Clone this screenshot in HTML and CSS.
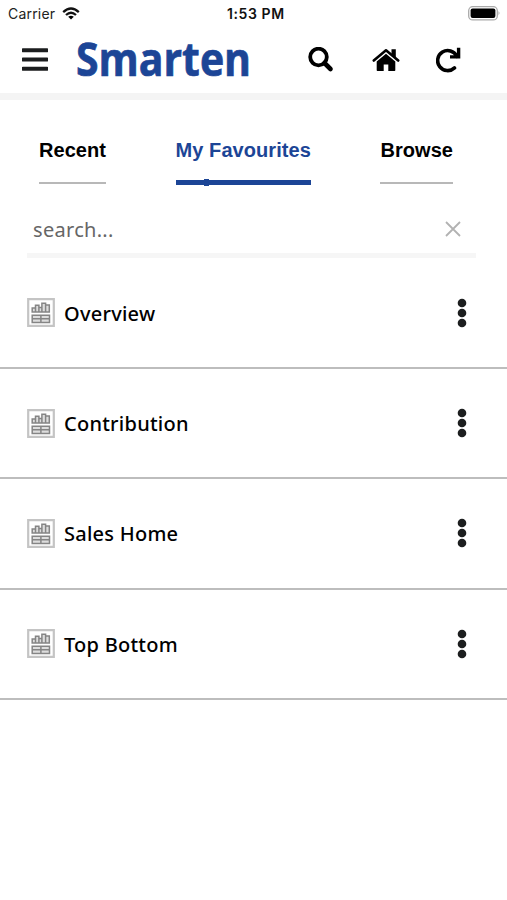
FILE: index.html
```html
<!DOCTYPE html>
<html lang="en">
<head>
<meta charset="utf-8">
<title>Smarten</title>
<link rel="stylesheet" href="styles.css">
</head>
<body>
<svg class="defs" width="0" height="0" aria-hidden="true">
  <symbol id="report" viewBox="0 0 28 29">
    <path d="M1.2 1.2h25.600v26.600H1.200z" fill="#fff" stroke="#c4c4c4" stroke-width="2.200"/>
    <path d="M5.200 14v-4H8.500v4zM8.500 14V7.300h3.400V14zM11.900 14V9.500h3V14zM14.900 14V5.300h3.700V14zM18.600 14V7h3.700v7zM5.200 17.200h17.300v7.200H5.200zM5.200 20.800h17.300M13.900 17.200v7.200" fill="#ddd" stroke="#858585" stroke-width="1.500"/>
  </symbol>
  <symbol id="dots" viewBox="0 0 10 30">
    <circle cx="5" cy="5" r="4.300"/><circle cx="5" cy="15" r="4.300"/><circle cx="5" cy="25" r="4.300"/>
  </symbol>
</svg>
<div class="status">
  <span class="carrier">Carrier</span>
  <svg class="wifi" viewBox="0 0 18 13"><path d="M1.200 5.100Q9-2 16.800 5.100M4 8Q9 3.500 14 8" fill="none" stroke="#111" stroke-width="2.300"/><path d="M9 12.500 6.200 9.800Q9 7.800 11.800 9.800z"/></svg>
  <span class="time">1:53 PM</span>
  <svg class="battery" viewBox="0 0 33 15"><rect x=".7" y=".7" width="28.600" height="13.200" rx="4" fill="#fff" stroke="#aaa" stroke-width="1.300"/><rect x="2.600" y="2.500" width="24.800" height="9.600" rx="2"/><path d="M30.700 5q1.600 2.300 0 4.600z" fill="#777"/></svg>
</div>
<header class="header">
  <svg class="menu" viewBox="0 0 26 24"><path d="M1 2.200h24M1 11.500h24M1 20.800h24" stroke="#1b1d1e" stroke-width="3.900" stroke-linecap="round"/></svg>
  <svg class="logo" viewBox="0 0 180 48"><text x="0" y="39.500" textLength="175" lengthAdjust="spacingAndGlyphs">Smarten</text></svg>
  <svg class="search" viewBox="0 0 26 26"><circle cx="10.500" cy="10" r="8.300" fill="none" stroke="#000" stroke-width="3.800"/><path d="m16.500 16 6 6" stroke="#000" stroke-width="4.600" stroke-linecap="round"/></svg>
  <svg class="home" viewBox="0 0 28 24"><path d="M1.800 12.500 14 2.300 26.200 12.500" fill="none" stroke="#000" stroke-width="2.600" stroke-linecap="round" stroke-linejoin="round"/><path d="M19.500 1.300h4.300v9l-4.300-3.500zM14 5.800l9.300 7.700v8.800q0 .7-.7.700H16.300v-6.500h-4.600V23H5.400q-.7 0-.7-.7v-8.800z"/></svg>
  <svg class="reload" viewBox="0 0 26 26"><path d="M18.500 20.900A10 10 0 1 1 20.700 9.300" fill="none" stroke="#000" stroke-width="3.600" stroke-linecap="round"/><path d="M20.900 .8h3.400v10.700H14V8.200h6.900z"/></svg>
</header>
<nav class="tabs">
  <a class="tab recent">Recent</a>
  <a class="tab active">My Favourites</a>
  <a class="tab browse">Browse</a>
</nav>
<div class="searchbar">
  <span class="hint">search...</span>
  <svg class="clear" viewBox="0 0 16 16"><path d="m1 1 14 14M15 1 1 15" stroke="#b2b2b2" stroke-width="1.800"/></svg>
</div>
<main class="list">
  <div class="row"><svg class="report"><use href="#report"/></svg><span class="name">Overview</span><svg class="dots"><use href="#dots"/></svg></div>
  <div class="row"><svg class="report"><use href="#report"/></svg><span class="name">Contribution</span><svg class="dots"><use href="#dots"/></svg></div>
  <div class="row"><svg class="report"><use href="#report"/></svg><span class="name">Sales Home</span><svg class="dots"><use href="#dots"/></svg></div>
  <div class="row"><svg class="report"><use href="#report"/></svg><span class="name">Top Bottom</span><svg class="dots"><use href="#dots"/></svg></div>
</main>
</body>
</html>
```
FILE: styles.css
```css
* { box-sizing: border-box; }
body { margin: 0; background: #fff; color: #000; font-family: "Noto Sans", sans-serif; height: 900px; overflow: hidden; }
svg { display: block; flex: none; }
.defs { position: absolute; }
.status { display: flex; align-items: center; height: 27px; padding: 0 6px 0 8px; font-family: Inter, sans-serif; font-size: 14px; line-height: 20px; }
.carrier { width: 54px; color: #222; letter-spacing: 0.2px; }
.wifi { width: 18px; height: 13px; }
.time { margin-left: 147px; font-weight: 600; letter-spacing: 0.6px; color: #111; white-space: nowrap; }
.battery { width: 33px; height: 15px; margin-left: auto; }
.header { display: flex; align-items: center; height: 73px; padding: 0 44px 0 22px; border-bottom: 7px solid #f4f4f4; }
.menu { width: 26px; height: 24px; }
.logo { width: 180px; height: 48px; margin-left: 28px; overflow: visible; }
.logo text { font: 700 46px "Open Sans", sans-serif; fill: #1c4596; stroke: #1c4596; stroke-width: 0.7px; }
.search { width: 26px; height: 26px; margin-left: 52px; }
.home { width: 28px; height: 24px; margin-left: 38px; }
.reload { width: 26px; height: 26px; margin-left: 36px; }
.tabs { display: flex; justify-content: space-between; height: 87px; padding: 38px 54px 0 39px; }
.tab { height: 46px; font: 700 20px/24px "Liberation Sans", sans-serif; letter-spacing: 0.06px; border-bottom: 2px solid #b8b8b8; white-space: nowrap; }
.active { color: #1c4596; border-bottom: 5px solid #1c4596; position: relative; height: 47px; }
.active::after { content: ""; position: absolute; left: 28px; bottom: -6px; width: 5px; height: 7px; background: #1c4596; }
.searchbar { display: flex; align-items: center; justify-content: space-between; height: 71px; margin: 0 31px 0 27px; padding: 20px 15px 0 6px; border-bottom: 5px solid #f6f6f6; }
.hint { margin-top: -1px; font-size: 20px; line-height: 28px; letter-spacing: 0.3px; color: #666; }
.clear { width: 16px; height: 16px; margin-top: -2px; }
.list { padding-top: 0.5px; }
.row { display: flex; align-items: center; height: 110.35px; padding: 0 40px 0 27px; border-bottom: 2px solid #bdbdbd; }
.report { width: 28px; height: 29px; }
.name { flex: 1; margin: 2px 0 0 9px; font-size: 20px; font-weight: 500; line-height: 28px; letter-spacing: 0.25px; }
.dots { width: 10px; height: 30px; fill: #1c1e1f; }
```
